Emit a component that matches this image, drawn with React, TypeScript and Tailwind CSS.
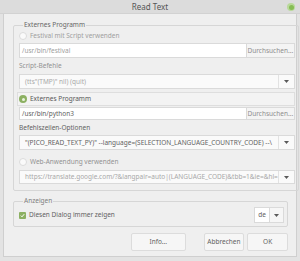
import { ReactNode } from "react";

// small down-pointing triangle used in every combo box
const Arrow = () => (
	<svg width="5" height="3" viewBox="0 0 5 3" className="shrink-0">
		<path d="M0 0 L5 0 L2.5 3 Z" fill="#5a5a5a" />
	</svg>
);

const Radio = ({ checked = false }: { checked?: boolean }) =>
	checked ? (
		<span className="flex size-[8px] shrink-0 items-center justify-center rounded-full bg-[#8cb062]">
			<span className="size-[3px] rounded-full bg-[#e9f3de]" />
		</span>
	) : (
		<span className="size-[8px] shrink-0 rounded-full border border-[#dcdcdc] bg-[#fafafa]" />
	);

const Combo = ({ text, className = "", muted = false }: { text: string; className?: string; muted?: boolean }) => (
	<div className={`flex items-stretch border border-[#dadada] bg-[#fafafa] ${className}`}>
		<div
			className={`flex min-w-0 flex-1 items-center overflow-hidden pl-[5px] whitespace-nowrap ${muted ? "text-[#a8a8a8]" : "text-[#626262]"}`}
		>
			{text}
		</div>
		<div className="flex w-[16px] items-center justify-center border-l border-[#e2e2e2]">
			<Arrow />
		</div>
	</div>
);

const PathRow = ({ value, className = "", muted = false }: { value: string; className?: string; muted?: boolean }) => (
	<div className={`flex ${className}`}>
		<div
			className={`flex flex-1 items-center border border-[#dadada] bg-white pl-[2px] ${muted ? "text-[#a0a0a0]" : "text-[#626262]"}`}
		>
			{value}
		</div>
		<button className="flex w-[48px] items-center justify-center border border-l-0 border-[#dadada] bg-[#f4f4f4] text-[#8e8e8e]">
			Durchsuchen...
		</button>
	</div>
);

const Button = ({ children, className = "" }: { children: ReactNode; className?: string }) => (
	<button
		className={`flex h-[18px] items-center justify-center rounded-[2px] border border-[#dcdcdc] bg-[#f6f6f6] text-[#626262] ${className}`}
	>
		{children}
	</button>
);

export default function App() {
	return (
		<div className="flex h-[261px] w-[300px] flex-col bg-[#e3e3e3] font-['Noto_Sans',sans-serif] text-[6.5px] leading-[8px]">
			{/* title bar */}
			<div className="relative flex h-[14px] shrink-0 items-center justify-center border-b border-[#d2d2d2] bg-[#dcdcdc] text-[8px] text-[#555]">
				Read Text
				<span className="absolute top-[3px] right-[5px] flex size-[8px] items-center justify-center rounded-full bg-[#b9d99a]">
					<span className="size-[5px] rounded-full bg-[#86bd55]" />
				</span>
			</div>

			<div className="mx-[3px] flex h-[243px] flex-col border-x border-b border-[#cfcfcf] bg-[#efefef] pt-[7px] pr-[8px] pl-[9px]">
				<fieldset className="rounded-[2px] border border-[#d6d6d6] pr-[3px] pb-[6px] pl-[5px]">
					<legend className="ml-[4px] px-[1px] text-[#666]">Externes Programm</legend>

					<div className="mt-[2px] flex h-[10px] items-center gap-[3px] text-[#a0a0a0]">
						<Radio />
						Festival mit Script verwenden
					</div>
					<PathRow value="/usr/bin/festival" muted className="mt-[2px] h-[15px]" />
					<div className="mt-[3px] flex h-[10px] items-center text-[#929292]">Script-Befehle</div>
					<Combo text={'(tts"(TMP)" nil) (quit)'} muted className="mt-[3px] h-[15px]" />

					<div className="mt-[3px] -ml-[2px] flex h-[14px] items-center gap-[3px] border border-[#dedede] bg-[#f3f3f3] pl-[1px] text-[#585858]">
						<Radio checked />
						Externes Programm
					</div>
					<PathRow value="/usr/bin/python3" className="mt-[1px] h-[13px]" />
					<div className="mt-[3px] flex h-[10px] items-center text-[#626262]">Befehlszeilen-Optionen</div>
					<Combo
						text={'"(PICO_READ_TEXT_PY)" --language=(SELECTION_LANGUAGE_COUNTRY_CODE) --\\'}
						className="mt-[2px] h-[15px]"
					/>

					<div className="mt-[7px] flex h-[10px] items-center gap-[3px] text-[#929292]">
						<Radio />
						Web-Anwendung verwenden
					</div>
					<Combo
						text="https://translate.google.com/?&langpair=auto|(LANGUAGE_CODE)&tbb=1&ie=&hl="
						muted
						className="mt-[3px] h-[14px]"
					/>
				</fieldset>

				<fieldset className="mt-[6px] rounded-[2px] border border-[#d6d6d6] pr-[3px] pb-[3px] pl-[5px]">
					<legend className="ml-[4px] px-[1px] text-[#7e7e7e]">Anzeigen</legend>
					<div className="mt-[2px] flex h-[16px] items-center">
						<span className="flex size-[7px] items-center justify-center rounded-[1px] bg-[#8cb062]">
							<svg width="5" height="5" viewBox="0 0 5 5">
								<path d="M0.8 2.6 L2 3.8 L4.2 1.2" fill="none" stroke="#fff" strokeWidth="1" />
							</svg>
						</span>
						<span className="ml-[3px] text-[#626262]">Diesen Dialog immer zeigen</span>
						<div className="ml-auto flex h-full items-stretch">
							<div className="flex w-[16px] items-center justify-center border border-[#dadada] bg-white text-[#626262]">
								de
							</div>
							<div className="flex w-[14px] items-center justify-center border border-l-0 border-[#dadada] bg-[#f6f6f6]">
								<Arrow />
							</div>
						</div>
					</div>
				</fieldset>

				<div className="mt-[6px] flex pl-[118px]">
					<Button className="w-[55px]">Info...</Button>
					<Button className="ml-[18px] w-[41px]">Abbrechen</Button>
					<Button className="ml-[3px] w-[41px]">OK</Button>
				</div>
			</div>
		</div>
	);
}
